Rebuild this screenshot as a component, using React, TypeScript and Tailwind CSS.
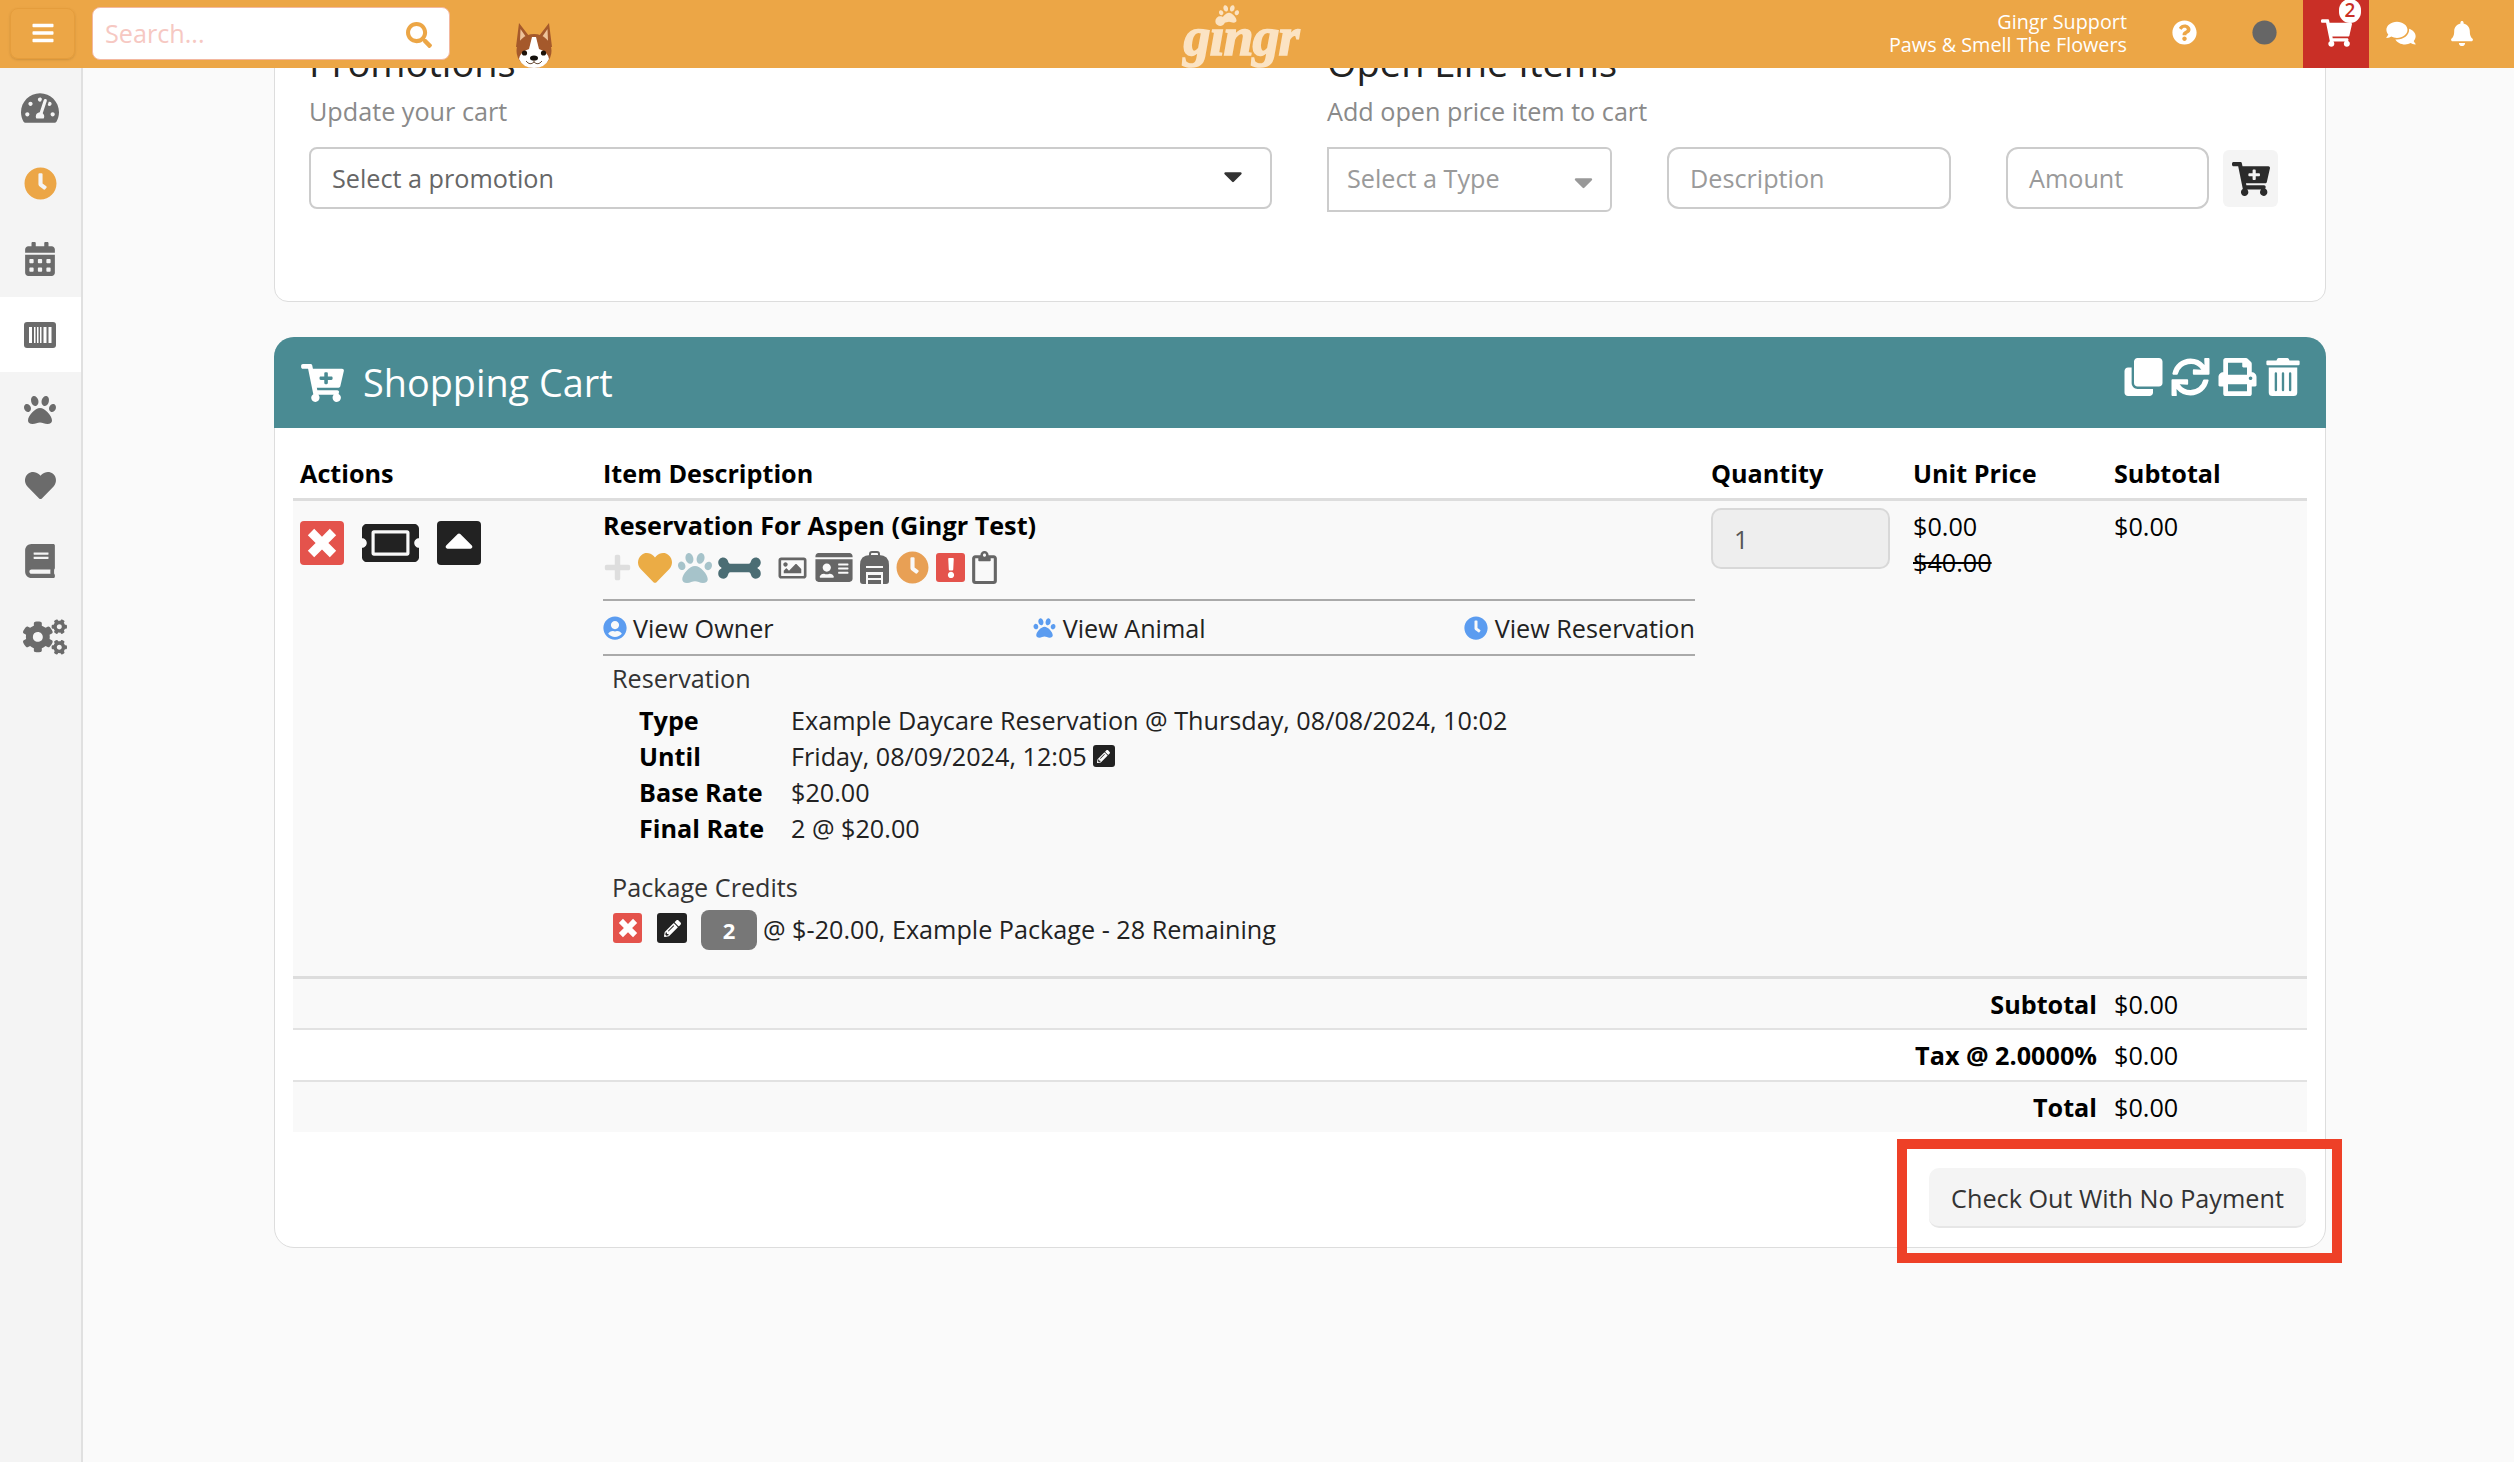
import React from "react";
import {
  FaBars, FaSearch, FaQuestionCircle, FaCircle, FaShoppingCart, FaComments, FaBell,
  FaTachometerAlt, FaClock, FaCalendarAlt, FaPaw, FaHeart, FaBook, FaCogs, FaCartPlus,
  FaClone, FaSync, FaPrint, FaTrashAlt, FaTicketAlt, FaCaretUp, FaPlus, FaBone,
  FaRegImage, FaIdCard, FaExclamation, FaRegClipboard, FaUserCircle, FaPencilAlt, FaCaretDown,
} from "react-icons/fa";

function Dog() {
  return (
    <svg viewBox="0 0 38 45" className="w-[38px] h-[45px]">
      <path d="M1 24 L4 0 L14 13 H24 L34 0 L37 24 Z" fill="#a5592b" />
      <path d="M5 18 L5.5 6 L11 14 Z M33 18 L32.5 6 L27 14 Z" fill="#eec39a" />
      <ellipse cx="19" cy="28" rx="17.5" ry="17" fill="#a5592b" />
      <path d="M17 14 H21 L24 26 Q33 29 34 36 Q30 45 19 45 Q8 45 4 36 Q5 29 14 26 Z" fill="#fff" />
      <circle cx="9.5" cy="30" r="2.6" fill="#1d1209" />
      <circle cx="28.5" cy="30" r="2.6" fill="#1d1209" />
      <ellipse cx="19" cy="35" rx="4" ry="2.6" fill="#14100c" />
      <path d="M19 37 V39 M11 38 Q15 43 19 39 Q23 43 27 38" stroke="#5a3a22" strokeWidth="0.9" fill="none" />
    </svg>
  );
}

function Backpack() {
  return (
    <svg viewBox="0 0 29 33" className="w-[29px] h-[33px]" fill="#666">
      <path d="M9 5 V3 Q9 0 12 0 H17 Q20 0 20 3 V5 H18 V3 Q18 2 17 2 H12 Q11 2 11 3 V5 Z" />
      <path fillRule="evenodd" d="M0 14 Q0 4 10 4 H19 Q29 4 29 14 V30 Q29 33 26 33 H3 Q0 33 0 30 Z M6 15 V17 H23 V15 Z M6 21 V33 H8 V24 H21 V33 H23 V21 Z M8 27 H21 V29 H8 Z" />
    </svg>
  );
}

function BarcodeBox() {
  return (
    <svg viewBox="0 0 32 26" className="w-[32px] h-[26px]">
      <rect width="32" height="26" rx="3" fill="#6b6b6b" />
      <path d="M5 5h3v16H5zM10 5h1.5v16H10zM13 5h1.5v16H13zM16 5h1.5v16H16zM19.5 5h3v16h-3zM24.5 5h3v16h-3z" fill="#fff" />
    </svg>
  );
}

function Cross({ className }: { className: string }) {
  return (
    <svg viewBox="0 0 24 24" className={className} fill="currentColor">
      <path d="M2 6.5 L6.5 2 L12 7.5 L17.500 2 L22 6.500 L16.500 12 L22 17.500 L17.500 22 L12 16.500 L6.500 22 L2 17.500 L7.500 12 Z" />
    </svg>
  );
}

function Box({ className, children }: { className: string; children: React.ReactNode }) {
  return <div className={`flex items-center justify-center ${className}`}>{children}</div>;
}

function Side({ active, children }: { active?: boolean; children: React.ReactNode }) {
  return (
    <div className={`h-[75.6px] flex items-center justify-center pr-[1px] ${active ? "bg-white" : ""}`}>
      {children}
    </div>
  );
}

export default function App() {
  return (
    <div className="relative h-[1462px] w-full overflow-hidden bg-[#fafafa] font-['Open_Sans',sans-serif] text-[25.2px] text-[#222] leading-[36px]">
      {/* top bar */}
      <header className="relative z-10 h-[68px] bg-[#eca646] flex items-center text-white">
        <button className="ml-[10px] w-[65px] h-[51px] -mt-[2px] rounded-[8px] border border-[#e59d3c] flex items-center justify-center shadow-sm">
          <FaBars className="w-[24px] h-[24px]" />
        </button>
        <div className="ml-[17px] w-[358px] h-[53px] -mt-[2px] bg-white rounded-[8px] border border-[#f3b8a0] flex items-center pl-[12px] pr-[17px] justify-between">
          <span className="text-[#f6c8c2]">Search...</span>
          <FaSearch className="w-[26px] h-[26px] text-[#eca646] mt-[4px]" />
        </div>
        <div className="ml-[65px] self-end flex"><Dog /></div>
        <div className="ml-[628px] w-[120px] h-[58px] relative flex items-end justify-center">
          <FaPaw className="absolute top-[-1px] left-[38px] w-[20px] h-[20px] text-[#fbe3c3]" />
          <span className="font-['Liberation_Serif',serif] italic font-bold text-[54px] leading-[52px] tracking-[-1px] text-[#fbe3c3] [-webkit-text-stroke:1.5px_#fbe3c3]">gingr</span>
        </div>
        <div className="ml-auto text-right text-[19.8px] leading-[23px] -mt-[2px]">
          <div>Gingr Support</div>
          <div>Paws &amp; Smell The Flowers</div>
        </div>
        <FaQuestionCircle className="ml-[45px] w-[25px] h-[25px] -mt-[3px]" />
        <FaCircle className="ml-[55px] w-[25px] h-[25px] -mt-[3px] text-[#666]" />
        <div className="relative ml-[26px] w-[66px] h-[68px] bg-[#c92f26] flex items-center justify-center">
          <FaShoppingCart className="w-[31px] h-[28px] -mt-[3px]" />
          <span className="absolute top-[-1px] left-[36px] w-[22px] h-[24px] rounded-full bg-white text-[#c92f26] text-[19px] leading-[22px] font-semibold text-center">2</span>
        </div>
        <FaComments className="ml-[17px] w-[30px] h-[26px] -mt-[2px]" />
        <FaBell className="ml-[35px] mr-[41px] w-[22px] h-[25px] -mt-[2px]" />
      </header>

      <div className="flex h-[1394px]">
        {/* side rail */}
        <aside className="w-[83px] shrink-0 bg-[#f4f4f4] border-r-2 border-[#e0e0e0] pt-[2px] text-[#6b6b6b]">
          <Side><FaTachometerAlt className="w-[38px] h-[34px]" /></Side>
          <Side><FaClock className="w-[33px] h-[33px] text-[#eca646]" /></Side>
          <Side><FaCalendarAlt className="w-[30px] h-[34px]" /></Side>
          <Side active><BarcodeBox /></Side>
          <Side><FaPaw className="w-[34px] h-[32px]" /></Side>
          <Side><FaHeart className="w-[35px] h-[31px]" /></Side>
          <Side><FaBook className="w-[30px] h-[34px]" /></Side>
          <Side><FaCogs className="w-[44px] h-[36px] ml-[10px]" /></Side>
        </aside>

        <main className="flex-1 overflow-hidden pl-[191px] pr-[188px]">
          {/* promotions card */}
          <section className="-mt-[38px] h-[272px] bg-white border border-[#ddd] rounded-[14px] pl-[34px] pt-[7px] flex">
            <div className="w-[963px]">
              <h2 className="text-[38px] leading-[48px] text-[#222]">Promotions</h2>
              <p className="mt-[7px] text-[#8a8a8a]">Update your cart</p>
              <div className="mt-[18px] h-[62px] rounded-[8px] border-2 border-[#ccc] flex items-center justify-between pl-[21px] pr-[27px] text-[#666]">
                <span>Select a promotion</span>
                <FaCaretDown className="w-[20px] h-[30px] text-[#333] -mt-[4px]" />
              </div>
            </div>
            <div className="ml-[55px]">
              <h2 className="text-[38px] leading-[48px] text-[#222]">Open Line Items</h2>
              <p className="mt-[7px] text-[#8a8a8a]">Add open price item to cart</p>
              <div className="mt-[18px] flex items-start">
                <div className="w-[285px] h-[65px] rounded-r-[6px] border-2 border-[#ccc] flex items-center justify-between pl-[18px] pr-[17px] pb-[3px] text-[#9a9a9a]">
                  <span>Select a Type</span>
                  <FaCaretDown className="w-[19px] h-[30px] text-[#999] mt-[7px]" />
                </div>
                <div className="ml-[55px] w-[284px] h-[62px] rounded-[12px] border-2 border-[#ccc] flex items-center pl-[21px] text-[#9a9a9a]">Description</div>
                <div className="ml-[55px] w-[203px] h-[62px] rounded-[12px] border-2 border-[#ccc] flex items-center pl-[21px] text-[#9a9a9a]">Amount</div>
                <Box className="ml-[14px] mt-[3px] w-[55px] h-[57px] rounded-[6px] bg-[#f4f4f4]">
                  <FaCartPlus className="w-[38px] h-[34px] text-[#2b2b2b]" />
                </Box>
              </div>
            </div>
          </section>

          {/* shopping cart panel */}
          <section className="mt-[35px] h-[911px] bg-white border border-[#ddd] rounded-[20px]">
            <div className="-mx-[1px] -mt-[1px] h-[91px] bg-[#4a8b93] rounded-t-[20px] flex items-center text-white pl-[27px] pr-[26px]">
              <FaCartPlus className="w-[43px] h-[38px]" />
              <span className="ml-[19px] text-[37.800px] leading-[50px]">Shopping Cart</span>
              <div className="ml-auto flex items-center gap-[8px] -mt-[12px]">
                <FaClone className="w-[39px] h-[38px]" />
                <FaSync className="w-[39px] h-[38px]" />
                <FaPrint className="w-[39px] h-[38px]" />
                <FaTrashAlt className="w-[34px] h-[38px] ml-[1px]" />
              </div>
            </div>

            <div className="mx-[18px]">
              <div className="grid grid-cols-[310px_1108px_202px_201px_193px] pt-[27px] pb-[7px] border-b-[3px] border-[#ddd] font-bold text-black">
                <div className="pl-[7px]">Actions</div>
                <div>Item Description</div>
                <div>Quantity</div>
                <div>Unit Price</div>
                <div>Subtotal</div>
              </div>

              <div className="grid grid-cols-[310px_1108px_202px_201px_193px] h-[475px] bg-[#f9f9f9] text-black">
                <div className="pl-[7px] pt-[20px] flex items-start">
                  <Box className="w-[44px] h-[44px] rounded-[4px] bg-[#e4534c]"><Cross className="w-[34px] h-[34px] text-white" /></Box>
                  <FaTicketAlt className="ml-[18px] w-[57px] h-[52px] -mt-[4px] text-[#222]" />
                  <Box className="ml-[18px] w-[44px] h-[44px] rounded-[4px] bg-[#222]"><FaCaretUp className="w-[32px] h-[46px] text-white -mt-[6px]" /></Box>
                </div>

                <div className="pr-[16px] pt-[6px]">
                  <div className="font-bold">Reservation For Aspen (Gingr Test)</div>
                  <div className="mt-[8px] h-[33px] flex items-center">
                    <FaPlus className="w-[29px] h-[29px] text-[#dedede]" />
                    <FaHeart className="ml-[6px] w-[34px] h-[34px] text-[#ebac45]" />
                    <FaPaw className="ml-[6px] w-[34px] h-[34px] text-[#a6c3ca]" />
                    <FaBone className="ml-[6px] w-[43px] h-[34px] text-[#4b6d74]" />
                    <FaRegImage className="ml-[15px] w-[33px] h-[28px] text-[#666]" />
                    <FaIdCard className="ml-[6px] w-[38px] h-[33px] text-[#666]" />
                    <div className="ml-[7px] flex"><Backpack /></div>
                    <FaClock className="ml-[7px] w-[33px] h-[33px] text-[#e8a055]" />
                    <Box className="ml-[7px] w-[29px] h-[29px] rounded-[3px] bg-[#e4534c]"><FaExclamation className="w-[18px] h-[20px] text-white" /></Box>
                    <FaRegClipboard className="ml-[7px] w-[25px] h-[33px] text-[#666]" />
                  </div>
                  <div className="mt-[15px] h-[2px] bg-[#aaa]" />
                  <div className="h-[53px] flex items-center justify-between text-[#222]">
                    <span className="flex items-center"><FaUserCircle className="w-[24px] h-[24px] text-[#5b9cf0] mr-[6px]" />View Owner</span>
                    <span className="flex items-center"><FaPaw className="w-[25px] h-[22px] text-[#5b9cf0] mr-[6px]" />View Animal</span>
                    <span className="flex items-center"><FaClock className="w-[24px] h-[24px] text-[#5b9cf0] mr-[7px]" />View Reservation</span>
                  </div>
                  <div className="h-[2px] bg-[#aaa]" />
                  <div className="mt-[4px] pl-[9px] text-[#333]">Reservation</div>
                  <div className="mt-[6px] pl-[36px] grid grid-cols-[152px_1fr] text-[#222]">
                    <b className="text-black">Type</b><span>Example Daycare Reservation @ Thursday, 08/08/2024, 10:02</span>
                    <b className="text-black">Until</b>
                    <span className="flex items-center">Friday, 08/09/2024, 12:05
                      <Box className="ml-[6px] w-[22px] h-[22px] rounded-[3px] bg-[#222]"><FaPencilAlt className="w-[13px] h-[13px] text-white" /></Box>
                    </span>
                    <b className="text-black">Base Rate</b><span>$20.00</span>
                    <b className="text-black">Final Rate</b><span>2 @ $20.00</span>
                  </div>
                  <div className="mt-[23px] pl-[9px] text-[#333]">Package Credits</div>
                  <div className="mt-[4px] pl-[10px] h-[40px] flex items-center text-[#222]">
                    <Box className="w-[29px] h-[30px] rounded-[3px] bg-[#e4534c] -mt-[2px]"><Cross className="w-[22px] h-[22px] text-white" /></Box>
                    <Box className="ml-[15px] w-[30px] h-[30px] rounded-[3px] bg-[#222] -mt-[2px]"><FaPencilAlt className="w-[17px] h-[17px] text-white" /></Box>
                    <Box className="ml-[14px] mt-[2px] w-[56px] h-[40px] rounded-[8px] bg-[#777] text-white text-[22px] font-bold">2</Box>
                    <span className="ml-[6px]">@ $-20.00, Example Package - 28 Remaining</span>
                  </div>
                </div>

                <div className="pt-[7px]">
                  <div className="w-[179px] h-[61px] rounded-[10px] border-2 border-[#d8d8d8] bg-[#eee] flex items-center pl-[21px] text-[#555]">1</div>
                </div>
                <div className="pt-[7px]">
                  <div>$0.00</div>
                  <div className="line-through">$40.00</div>
                </div>
                <div className="pt-[7px]">$0.00</div>
              </div>

              <div className="border-t-[3px] border-[#ddd] text-black">
                <div className="h-[51px] pt-[1px] flex items-center bg-[#f9f9f9] border-b-2 border-[#e2e2e2]">
                  <b className="w-[1804px] text-right">Subtotal</b><span className="ml-[17px]">$0.00</span>
                </div>
                <div className="h-[52px] flex items-center border-b-2 border-[#e2e2e2]">
                  <b className="w-[1804px] text-right">Tax @ 2.0000%</b><span className="ml-[17px]">$0.00</span>
                </div>
                <div className="h-[50px] flex items-center bg-[#f9f9f9]">
                  <b className="w-[1804px] text-right">Total</b><span className="ml-[17px]">$0.00</span>
                </div>
              </div>

              <div className="mt-[36px] flex justify-end">
                <button className="mr-[1px] w-[377px] h-[60px] pt-[2px] rounded-[10px] bg-[#f4f4f4] border-b-2 border-[#e6e6e6] text-[#333]">Check Out With No Payment</button>
              </div>
            </div>
          </section>
        </main>
      </div>

      {/* annotation */}
      <div className="absolute left-[1897px] top-[1139px] w-[445px] h-[124px] border-[10px] border-[#ee4027]" />
    </div>
  );
}
